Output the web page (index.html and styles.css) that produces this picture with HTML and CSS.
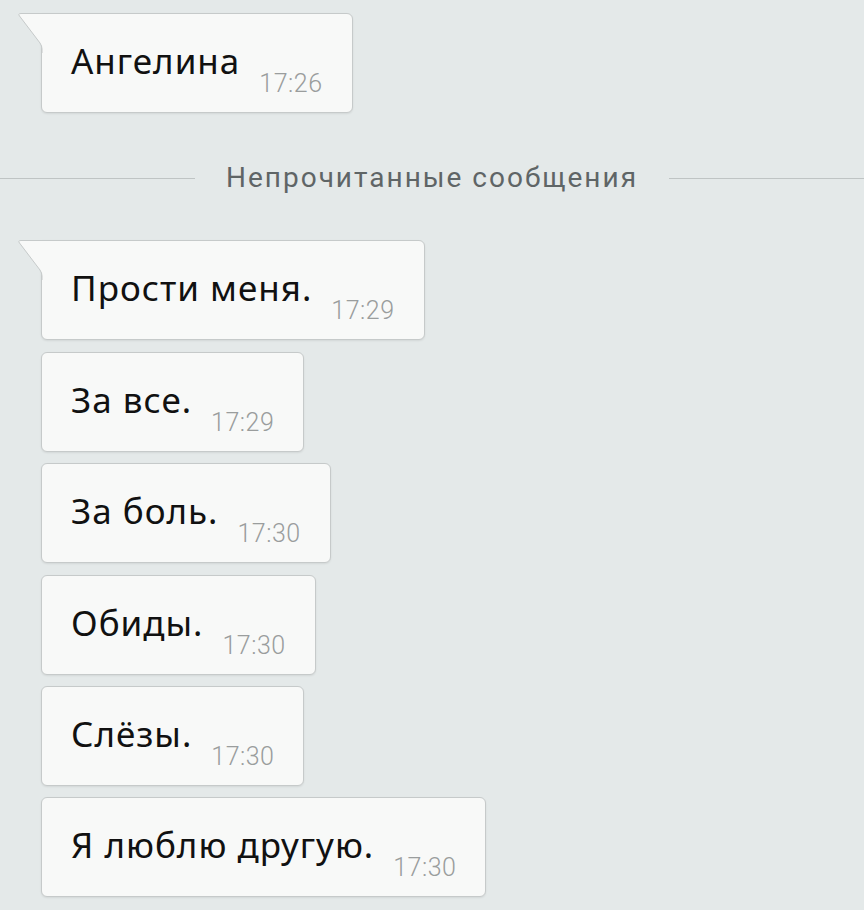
FILE: index.html
```html
<!DOCTYPE html>
<html>
<head>
  <meta charset="UTF-8">
  <title>Чат</title>
  <link rel="stylesheet" href="styles.css">
</head>
<body>
  <div class="chat">
    <div class="bubble tail">
      <svg class="tail-shape" width="26" height="40" viewBox="0 0 26 40">
        <path d="M24 0.5 L3 0.5 Q-0.5 0.5 1.5 3 L22 30 Q24 33 24 36 L24 40" fill="#f8f9f8" stroke="#c6caca" stroke-width="1"/>
      </svg>
      <span class="text">Ангелина</span>
      <span class="time">17:26</span>
    </div>

    <div class="divider">
      <span class="line"></span>
      <span class="divider-text">Непрочитанные сообщения</span>
      <span class="line"></span>
    </div>

    <div class="bubble tail">
      <svg class="tail-shape" width="26" height="40" viewBox="0 0 26 40">
        <path d="M24 0.5 L3 0.5 Q-0.5 0.5 1.5 3 L22 30 Q24 33 24 36 L24 40" fill="#f8f9f8" stroke="#c6caca" stroke-width="1"/>
      </svg>
      <span class="text">Прости меня.</span>
      <span class="time">17:29</span>
    </div>
    <div class="bubble">
      <span class="text">За все.</span>
      <span class="time">17:29</span>
    </div>
    <div class="bubble">
      <span class="text">За боль.</span>
      <span class="time">17:30</span>
    </div>
    <div class="bubble">
      <span class="text">Обиды.</span>
      <span class="time">17:30</span>
    </div>
    <div class="bubble">
      <span class="text">Слёзы.</span>
      <span class="time">17:30</span>
    </div>
    <div class="bubble">
      <span class="text">Я люблю другую.</span>
      <span class="time">17:30</span>
    </div>
  </div>
</body>
</html>
```

FILE: styles.css
```css
:root {
  --bg-color: #e4e9e9;
  --bubble-color: #f8f9f8;
  --border-color: #c6caca;
  --text-color: #111;
  --time-color: #9a9d9d;
}
* {
  box-sizing: border-box;
}
body {
  margin: 0;
  padding: 0;
  background-color: var(--bg-color);
  font-family: 'Noto Sans', Roboto, sans-serif;
  height: 910px;
  overflow: hidden;
}
.chat {
  display: flex;
  flex-direction: column;
  align-items: flex-start;
  padding-top: 13px;
}
.bubble {
  position: relative;
  display: flex;
  align-items: flex-start;
  margin-left: 41px;
  margin-bottom: 11.4px;
  padding: 27px 29px 0 29px;
  height: 100px;
  background-color: var(--bubble-color);
  border: 1px solid var(--border-color);
  border-radius: 6px;
  box-shadow: 0 1px 2px rgba(0, 0, 0, 0.08);
}
.bubble.tail {
  border-top-left-radius: 0;
}
.tail-shape {
  position: absolute;
  left: -24px;
  top: -1px;
}
.text {
  font-size: 35px;
  line-height: 40px;
  letter-spacing: 1px;
  color: var(--text-color);
  white-space: nowrap;
}
.time {
  margin-top: 30px;
  margin-left: 19px;
  font-family: Roboto, sans-serif;
  font-size: 25px;
  line-height: 25px;
  font-weight: 300;
  letter-spacing: 0.5px;
  color: var(--time-color);
  white-space: nowrap;
}
.divider {
  display: flex;
  align-items: center;
  align-self: stretch;
  gap: 31px;
  margin: 38px 0 46px;
}
.line {
  flex: 1;
  height: 1px;
  background-color: #bfc4c4;
}
.divider-text {
  font-family: Roboto, sans-serif;
  font-size: 28px;
  line-height: 32px;
  letter-spacing: 2px;
  color: #5f6566;
}
```
